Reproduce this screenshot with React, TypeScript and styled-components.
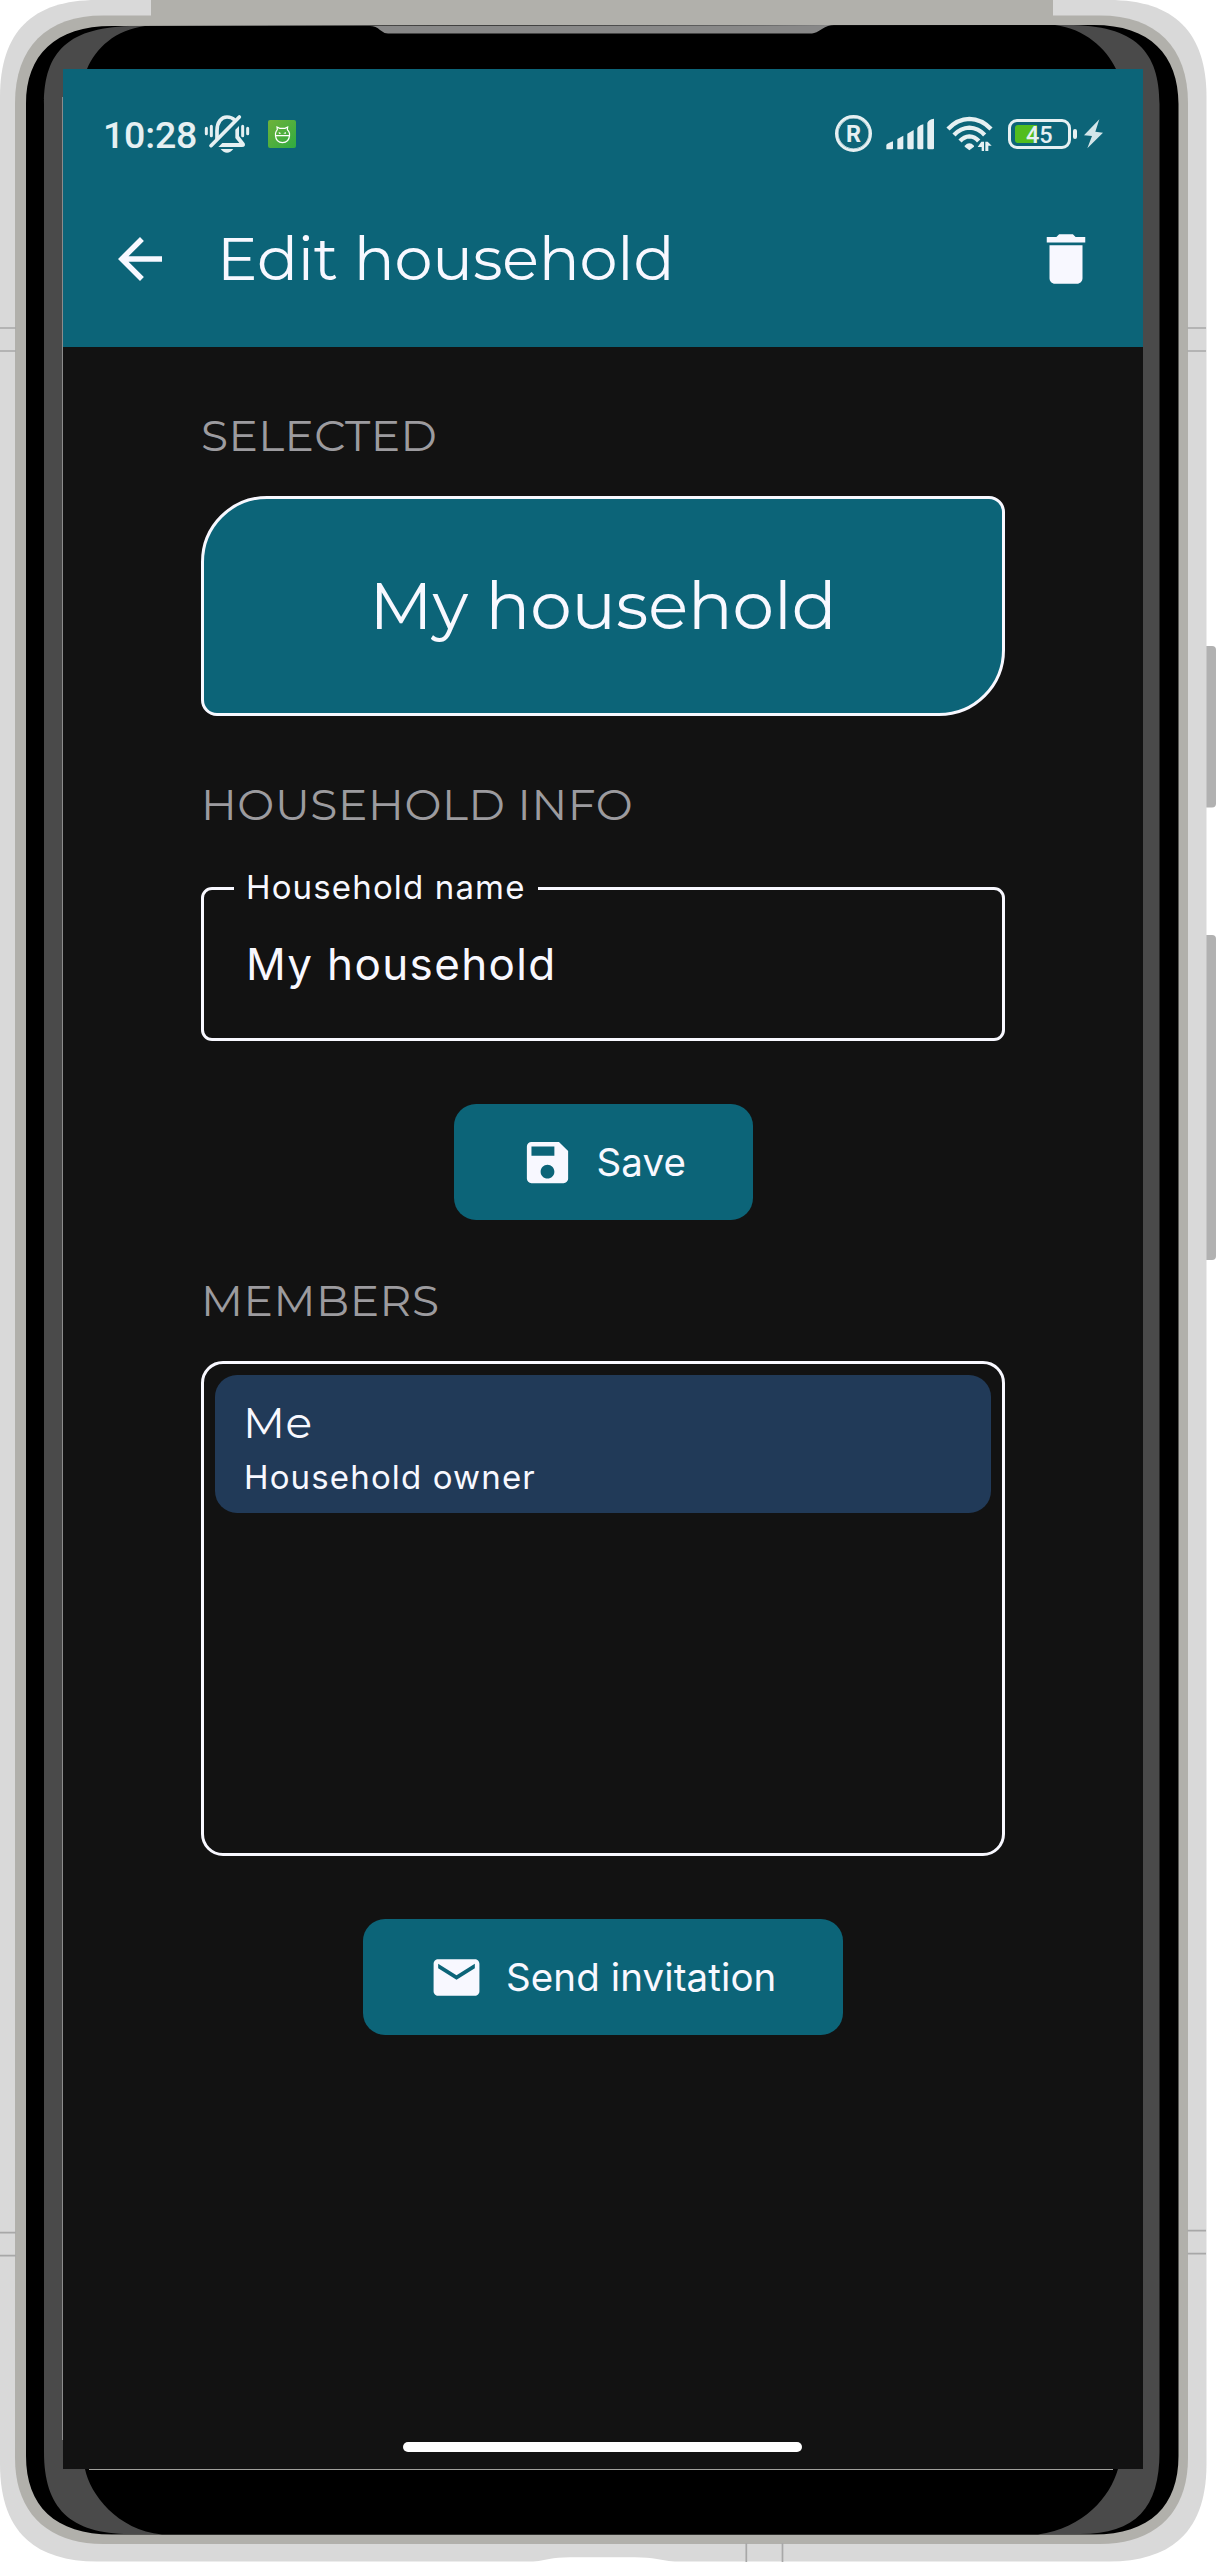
import React from "react";
import styled, { createGlobalStyle } from "styled-components";
import { MdArrowBack, MdDelete, MdEmail, MdSave } from "react-icons/md";

const color = {
  teal: "#0c6478",
  screen: "#121212",
  ink: "#f8f8ff",
  muted: "#9c9b9f",
  member: "#213a58",
  status: "#e6f0f2",
};

const display = `Montserrat, Lato, "Open Sans", sans-serif`;
const body = `Inter, Roboto, sans-serif`;

const GlobalStyle = createGlobalStyle`
  * { box-sizing: border-box; }
  body { margin: 0; background: #fff; }
`;

const Device = styled.div`
  position: relative;
  width: 1216px;
  height: 2562px;
  padding: 69px 73px 93px 63px;
  overflow: hidden;
`;

const Shell = styled.svg`
  position: absolute;
  inset: 0;
  display: block;
`;

const Screen = styled.div`
  position: relative;
  display: flex;
  flex-direction: column;
  width: 1080px;
  height: 2400px;
  background: ${color.screen};
  color: ${color.ink};
  font-family: ${body};
`;

const Header = styled.header`
  height: 278px;
  background: ${color.teal};
`;

const StatusBar = styled.div`
  display: flex;
  align-items: center;
  height: 129px;
  padding: 0 40px;
  color: ${color.status};
  font-family: Roboto, sans-serif;
`;

const Clock = styled.span`
  width: 101px;
  padding-top: 2px;
  font-size: 37.5px;
  font-weight: 500;
  line-height: 40px;
  letter-spacing: -0.2px;
  white-space: nowrap;
`;

const Glyph = styled.svg<{ $gap?: number }>`
  flex: none;
  display: block;
  margin-left: ${(p) => p.$gap ?? 0}px;
`;

const StatusRight = styled.div`
  display: flex;
  align-items: center;
  margin-left: auto;
`;

const Registered = styled.span`
  display: flex;
  align-items: center;
  justify-content: center;
  width: 37px;
  height: 37px;
  border: 3px solid currentColor;
  box-shadow: inset 0 0 0 0.5px currentColor;
  border-radius: 50%;
  font-size: 23.5px;
  font-weight: 700;
  line-height: 30px;
`;

const Battery = styled.span`
  position: relative;
  display: flex;
  align-items: center;
  width: 63px;
  height: 30px;
  margin-left: 15px;
  padding-left: 4px;
  border: 3px solid currentColor;
  border-radius: 9px;
`;

const BatteryFill = styled.span`
  width: 22px;
  height: 18px;
  border-radius: 3px 0 0 3px;
  background: #52bd1e;
`;

const BatteryText = styled.span`
  position: absolute;
  left: 15px;
  top: 0;
  font-size: 23.5px;
  font-weight: 500;
  line-height: 26px;
`;

const BatteryTip = styled.span`
  width: 4px;
  height: 10px;
  margin-left: 2px;
  border-radius: 2px;
  background: currentColor;
`;

const Toolbar = styled.div`
  display: flex;
  align-items: center;
  height: 149px;
  padding: 0 44px 27px;
  svg { flex: none; }
`;

const Title = styled.h1`
  flex: 1;
  margin: 0 0 0 44px;
  padding-bottom: 2px;
  font: 400 60.5px/72px ${display};
  letter-spacing: -0.1px;
  white-space: nowrap;
`;

const Content = styled.main`
  display: flex;
  flex-direction: column;
  align-items: center;
  width: 804px;
  margin-left: 138px;
  padding-top: 58px;
`;

const SectionTitle = styled.h2<{ $spacing: number }>`
  align-self: stretch;
  margin: 0;
  font: 400 44px/60px ${display};
  letter-spacing: ${(p) => p.$spacing}px;
  color: ${color.muted};
  white-space: nowrap;
`;

const SelectedCard = styled.div`
  display: flex;
  align-items: center;
  justify-content: center;
  width: 804px;
  height: 220px;
  margin: 31px 0 58px;
  border: 3px solid ${color.ink};
  border-radius: 66px 16px 66px 16px;
  background: ${color.teal};
  font: 400 66px/80px ${display};
  white-space: nowrap;
`;

const Field = styled.fieldset`
  width: 804px;
  height: 173px;
  margin: 34px 0 63px;
  padding: 0 0 0 42px;
  border: 3px solid ${color.ink};
  border-radius: 11px;
`;

const FieldLabel = styled.legend`
  width: 304px;
  height: 41px;
  margin-left: -12px;
  padding: 0 0 3px 12px;
  font-size: 33px;
  line-height: 38px;
  letter-spacing: 1.15px;
  white-space: nowrap;
`;

const FieldValue = styled.div`
  padding-top: 25px;
  font-size: 44px;
  line-height: 60px;
  letter-spacing: 1.35px;
`;

const Button = styled.button<{ $width: number }>`
  display: flex;
  align-items: center;
  width: ${(p) => p.$width}px;
  height: 116px;
  padding: 0 0 0 66px;
  gap: 22px;
  border: 0;
  border-radius: 22px;
  background: ${color.teal};
  color: ${color.ink};
  font: 400 38.5px/48px ${body};
  letter-spacing: 0.1px;
  white-space: nowrap;
  svg { flex: none; }
`;

const MembersTitle = styled(SectionTitle)`
  margin-top: 50px;
`;

const MemberList = styled.div`
  width: 804px;
  height: 495px;
  margin: 31px 0 63px;
  padding: 11px;
  border: 3px solid ${color.ink};
  border-radius: 22px;
`;

const Member = styled.div`
  height: 138px;
  padding: 17px 0 0 28px;
  border-radius: 22px;
  background: ${color.member};
`;

const MemberName = styled.div`
  font: 400 44px/60px ${display};
  letter-spacing: 0.41px;
`;

const MemberRole = styled.div`
  padding: 1px 0 0 1px;
  font-size: 33px;
  line-height: 48px;
  letter-spacing: 1.15px;
`;

const HomeBar = styled.div`
  width: 399px;
  height: 10px;
  margin: auto 0 17px 340px;
  border-radius: 5px;
  background: #fff;
`;

function PhoneShell() {
  return (
    <Shell width="1216" height="2562" viewBox="0 0 1216 2562" aria-hidden>
      <g fill="#b1b1b1">
        <rect x="1200" y="646" width="16" height="161.5" rx="4" />
        <rect x="1200" y="935" width="16" height="325" rx="4" />
      </g>
      <path fill="#d9d9d9" d="M0 97C0 32 32 0 97 0H1109C1174 0 1206.500 32 1206.500 97V2464C1206.500 2529 1174 2561.500 1109 2561.500H97C32 2561.500 0 2529 0 2464Z" />
      <path fill="#b1b0ab" d="M151 0H1053V30H151Z" />
      <path fill="#b1b0ab" d="M15 103C15 47 47 15.500 103 15.500H1100C1156 15.500 1188 47 1188 103V2458C1188 2512 1156 2544 1100 2544H103C47 2544 15 2512 15 2458Z" />
      <path fill="#000" d="M26 104C26 55 55 26 112 26L1094 25C1150 25 1178.500 55 1178.500 104V2456C1178.500 2506 1150 2534.500 1094 2534.500H112C55 2534.500 26 2506 26 2456Z" />
      <path fill="#4a4a4a" d="M44 104C44 52 68 26 136 26L1067 25C1136 25 1159.500 52 1159.500 104V2452C1159.500 2508 1136 2534 1080 2534H130C70 2534 44 2508 44 2452Z" />
      <path fill="#000" d="M87 69C96 48 115 30 145 26L1055 25C1085 29 1106 48 1116 69V2469H1118C1110 2497 1084 2528 1038 2534.500H162C117 2530 90 2494 85 2469H87Z" />
      <path fill="#888" d="M370 26Q376 26 380 30Q384 33.500 388 33.500H812Q816 33 822 29Q828 25 834 25Z" />
      <path stroke="#8c8c8c" d="M62.500 97V2440" />
      <path stroke="#a0a09c" d="M89 2469.500H1113" />
      <path stroke="#a8a8a8" strokeWidth="1.700" d="M0 328H16M0 351H16M1187.500 328H1206M1187.500 351H1206M0 2232.600H16M0 2255.600H16M1187.500 2230.700H1206M1187.500 2253.700H1206M746.300 2543V2562M782.500 2543V2562" />
      <path fill="#fff" d="M533 2562C545 2560 552 2557.500 570 2557.300H635C653 2557.500 662 2560 675 2562Z" />
    </Shell>
  );
}

function SilentBell() {
  return (
    <Glyph width="46" height="40" viewBox="612 342 138 120" fill="none" stroke="currentColor" strokeLinecap="round">
      <path strokeWidth="11" strokeLinecap="butt" d="M651 419V392C651 366 664 351 681 351C691 351 698 354 704 360" />
      <path strokeWidth="11" d="M633 437L718 351" />
      <path stroke="none" fill="currentColor" d="M706 389L717 378V408L734 430Q738 441 726 441H655L667 429H718L706 414Z" />
      <path stroke="none" fill="currentColor" d="M662 447H700Q692 458 681 458Q670 458 662 447Z" />
      <path strokeWidth="9" d="M619 385V401M634 379V407M728 379V407M743 385V401" />
    </Glyph>
  );
}

function AppBadge() {
  return (
    <Glyph $gap={18} width="28" height="28" viewBox="804 357 84 84">
      <defs>
        <linearGradient id="badge" x1="0" y1="0" x2="1" y2="1">
          <stop offset="0" stopColor="#6fb23a" />
          <stop offset="1" stopColor="#2fab41" />
        </linearGradient>
      </defs>
      <rect x="804" y="357" width="84" height="84" rx="6" fill="url(#badge)" />
      <path fill="none" stroke="#fff" strokeWidth="3.600" d="M826.500 404V397Q828 390 832 386L831 378L839 382H855L863 378L862 386Q867 390 868.500 397V404ZM826.500 404Q828 424 847.500 425Q867 424 868.500 404" />
      <path fill="#fff" d="M836 393L844 397L837 399ZM858 393L850 397L857 399Z" />
    </Glyph>
  );
}

function Signal() {
  return (
    <Glyph $gap={14} width="48" height="32" viewBox="210 353 144 96" fill="currentColor">
      <path d="M211 447V434Q213 429 231 423V444Q231 447 228 447ZM244 447V416L262 406V444Q262 447 259 447H246ZM274 444V400L293 389V444Q293 447 290 447H277ZM304 444V384Q306 376 322 372V444Q322 447 319 447H307ZM334 444V368Q337 357 354 355V444Q354 447 351 447H337Z" />
    </Glyph>
  );
}

function Wifi() {
  return (
    <Glyph $gap={12} width="47" height="36" viewBox="391 348 141 108" fill="none" stroke="currentColor">
      <path strokeWidth="13" d="M397 387Q425 357 461 356.500Q498 357 526 387" />
      <path strokeWidth="13" d="M415 405Q435 384 461 383Q488 384 507 405" />
      <path strokeWidth="13" d="M433 423Q445 410 461 409Q478 410 489 423" />
      <path stroke="none" fill="currentColor" d="M447 437Q461 423 475 437V440L461 451L447 440Z" />
      <path stroke="none" fill="currentColor" d="M497 425H505V453H498V441H486ZM509 425H516L528 437H518V453H509Z" />
    </Glyph>
  );
}

function Bolt() {
  return (
    <Glyph $gap={7} width="19" height="30" viewBox="804 356 57 90" fill="#d3e5e9">
      <path d="M850 357L804 405L828 407L814 444L861 397L838 394Z" />
    </Glyph>
  );
}

export default function App() {
  return (
    <Device>
      <GlobalStyle />
      <PhoneShell />
      <Screen>
        <Header>
          <StatusBar>
            <Clock>10:28</Clock>
            <SilentBell />
            <AppBadge />
            <StatusRight>
              <Registered>R</Registered>
              <Signal />
              <Wifi />
              <Battery>
                <BatteryFill />
                <BatteryText>45</BatteryText>
              </Battery>
              <BatteryTip />
              <Bolt />
            </StatusRight>
          </StatusBar>
          <Toolbar>
            <MdArrowBack size={66} />
            <Title>Edit household</Title>
            <MdDelete size={66} />
          </Toolbar>
        </Header>
        <Content>
          <SectionTitle $spacing={0.35}>SELECTED</SectionTitle>
          <SelectedCard>My household</SelectedCard>
          <SectionTitle $spacing={0.6}>HOUSEHOLD INFO</SectionTitle>
          <Field>
            <FieldLabel>Household name</FieldLabel>
            <FieldValue>My household</FieldValue>
          </Field>
          <Button $width={299}>
            <MdSave size={55} />
            Save
          </Button>
          <MembersTitle $spacing={0.5}>MEMBERS</MembersTitle>
          <MemberList>
            <Member>
              <MemberName>Me</MemberName>
              <MemberRole>Household owner</MemberRole>
            </Member>
          </MemberList>
          <Button $width={480}>
            <MdEmail size={55} />
            Send invitation
          </Button>
        </Content>
        <HomeBar />
      </Screen>
    </Device>
  );
}
